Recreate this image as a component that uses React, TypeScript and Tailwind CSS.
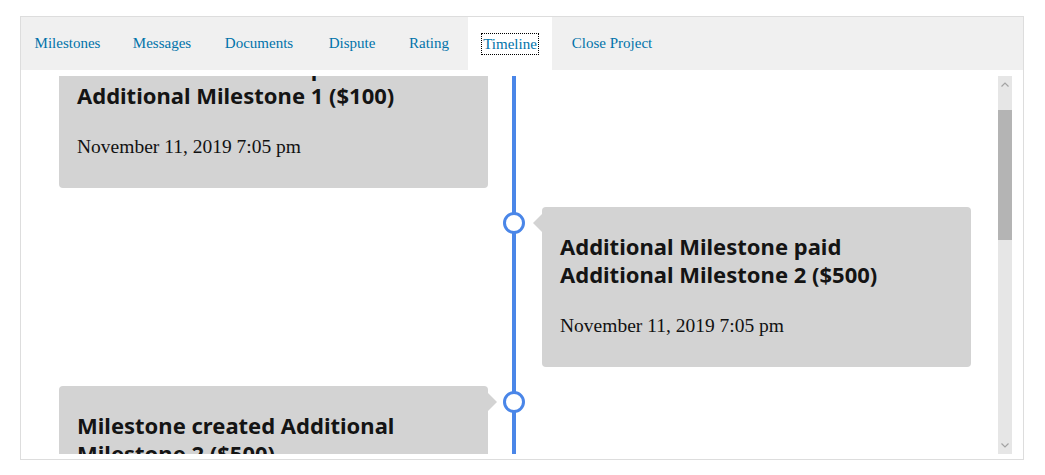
import React from "react";

const tabs = [
  { label: "Milestones", w: "w-[93px]" },
  { label: "Messages", w: "w-[84px]" },
  { label: "Documents", w: "w-[98px]" },
  { label: "Dispute", w: "w-[76px]" },
  { label: "Rating", w: "w-[66px]" },
  { label: "Timeline", w: "w-[84px]", active: true },
  { label: "Close Project", w: "w-[108px]" },
];

type Item = { side: "left" | "right"; title: string };

const items: Item[] = [
  { side: "left", title: "Additional Milestone paid Additional Milestone 1 ($100)" },
  { side: "right", title: "Additional Milestone paid Additional Milestone 2 ($500)" },
  { side: "left", title: "Milestone created Additional Milestone 2 ($500)" },
];

function Card({ item }: { item: Item }) {
  const left = item.side === "left";
  return (
    <div className={left ? "flex pl-[38px]" : "flex pl-[521px]"}>
      <div className="relative w-[429px] shrink-0 rounded-[4px] bg-[#d3d3d3] pl-[18px] pr-[34px] pt-[25px] pb-[30px]">
        {left ? (
          <div className="absolute right-[-9px] top-[7px] h-0 w-0 border-y-[9px] border-l-[9px] border-y-transparent border-l-[#d3d3d3]" />
        ) : (
          <div className="absolute left-[-9px] top-[7px] h-0 w-0 border-y-[9px] border-r-[9px] border-y-transparent border-r-[#d3d3d3]" />
        )}
        <div
          className={
            (left ? "left-[444px]" : "left-[-39px]") +
            " absolute top-[5px] z-10 h-[22px] w-[22px] rounded-full border-[3px] border-[#4a86e8] bg-white"
          }
        />
        <h3 className="font-['Noto_Sans',sans-serif] text-[22px] font-bold leading-[28px] text-[#141414]">
          {item.title}
        </h3>
        <p className="mt-[27px] font-['Liberation_Serif',serif] text-[19.5px] leading-[22px] text-[#111]">
          November 11, 2019 7:05 pm
        </p>
      </div>
    </div>
  );
}

export default function App() {
  return (
    <div className="h-[475px] w-[1045px] overflow-hidden bg-white pt-[16px] pl-[20px]">
      <div className="flex h-[444px] w-[1004px] flex-col overflow-hidden border border-[#dddddd]">
        <div className="flex h-[53px] shrink-0 gap-[6px] bg-[#f0f0f0]">
          {tabs.map((t) => (
            <div
              key={t.label}
              className={
                t.w +
                " flex items-center justify-center font-['Liberation_Serif',serif] text-[15px] text-[#0073aa] " +
                (t.active ? "bg-white" : "")
              }
            >
              {t.active ? (
                <span className="px-[1px] leading-[20px] outline outline-1 outline-dotted outline-black">{t.label}</span>
              ) : (
                t.label
              )}
            </div>
          ))}
        </div>
        <div className="flex min-h-0 flex-1 pt-[6px] pb-[5px]">
          <div className="relative min-h-0 flex-1 overflow-hidden">
            <div className="absolute left-[491px] top-0 bottom-0 w-[4px] bg-[#4a86e8]" />
            <div className="relative mt-[-48px] flex flex-col gap-[19px]">
              {items.map((it, i) => (
                <Card key={i} item={it} />
              ))}
            </div>
          </div>
          <div className="ml-[1px] mr-[11px] flex w-[14px] flex-col bg-[#e6e6e6]">
            <div className="flex h-[17px] items-center justify-center">
              <svg width="8" height="5" viewBox="0 0 8 5">
                <path d="M0.5 4.5 L4 1 L7.5 4.5" fill="none" stroke="#a3a3a3" strokeWidth="1.2" />
              </svg>
            </div>
            <div className="h-[17px]" />
            <div className="h-[130px] bg-[#b4b4b4]" />
            <div className="flex-1" />
            <div className="flex h-[17px] items-center justify-center">
              <svg width="8" height="5" viewBox="0 0 8 5">
                <path d="M0.5 0.5 L4 4 L7.5 0.5" fill="none" stroke="#a3a3a3" strokeWidth="1.2" />
              </svg>
            </div>
          </div>
        </div>
      </div>
    </div>
  );
}
